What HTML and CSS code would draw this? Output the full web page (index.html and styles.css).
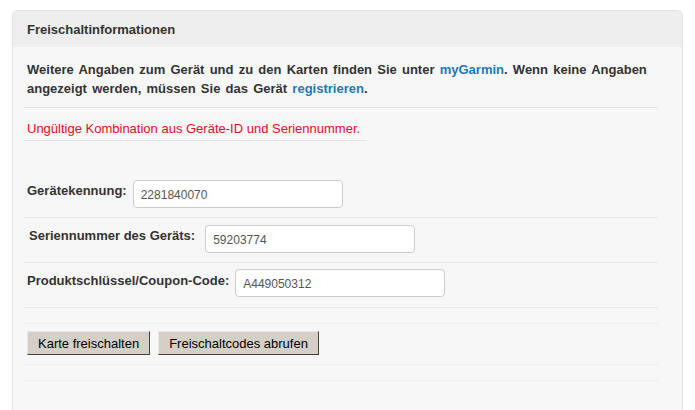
FILE: index.html
```html
<!DOCTYPE html>
<html lang="de">
<head>
<meta charset="utf-8">
<title>Freischaltinformationen</title>
<link rel="stylesheet" href="styles.css">
</head>
<body>
<div class="panel">
  <div class="panel-head">Freischaltinformationen</div>
  <div class="panel-body">
    <p class="intro">Weitere Angaben zum Gerät und zu den Karten finden Sie unter <a href="#">myGarmin</a>. Wenn keine Angaben angezeigt werden, müssen Sie das Gerät <a href="#">registrieren</a>.</p>
    <div class="error">Ungültige Kombination aus Geräte-ID und Seriennummer.</div>
    <div class="spacer"></div>
    <div class="row row1">
      <label class="label">Gerätekennung:</label>
      <input class="field" type="text" value="2281840070">
    </div>
    <div class="row row2">
      <label class="label">Seriennummer des Geräts:</label>
      <input class="field" type="text" value="59203774">
    </div>
    <div class="row row3">
      <label class="label">Produktschlüssel/Coupon-Code:</label>
      <input class="field" type="text" value="A449050312">
    </div>
    <div class="gap"></div>
    <div class="actions">
      <button class="btn" type="button">Karte freischalten</button>
      <button class="btn" type="button">Freischaltcodes abrufen</button>
    </div>
    <div class="gap"></div>
  </div>
</div>
</body>
</html>
```

FILE: styles.css
```css
html, body {
  margin: 0;
  padding: 0;
  background: #ffffff;
}
body {
  font-family: "Liberation Sans", Arial, sans-serif;
  color: #333333;
  padding: 10px 0 0 12px;
  height: 410px;
  box-sizing: border-box;
  overflow: hidden;
}
.panel {
  width: 669px;
  height: 399px;
  border: 1px solid #e2e2e2;
  border-bottom: none;
  border-radius: 6px 6px 0 0;
  background: #f7f7f7;
  overflow: hidden;
}
.panel-head {
  height: 36px;
  line-height: 38px;
  background: #eeeeee;
  padding-left: 14px;
  font-size: 13px;
  font-weight: bold;
  color: #333333;
}
.panel-body {
  padding: 0 24px 0 11px;
}
.intro {
  margin: 0;
  padding: 13px 0 9px 3px;
  font-size: 13px;
  font-weight: bold;
  line-height: 19px;
  word-spacing: 1.6px;
  color: #333333;
  border-bottom: 1px solid #e6e6e6;
}
.intro a {
  color: #1b7ab8;
  text-decoration: none;
}
.error {
  width: 340px;
  padding: 11px 0 2px 3px;
  font-size: 13px;
  line-height: 19px;
  color: #e0101e;
  border-bottom: 1px solid #e3e3e3;
}
.spacer {
  height: 31px;
}
.row {
  display: flex;
  align-items: flex-start;
  padding: 8px 0 9px 3px;
  border-bottom: 1px solid #e8e8e8;
}
.label {
  font-size: 13px;
  font-weight: bold;
  color: #333333;
  padding-top: 3px;
}
.row1 .label { margin-right: 6px; }
.row2 { padding-left: 5px; padding-top: 7px; }
.row2 .label { margin-right: 10px; }
.row3 { padding-top: 6px; padding-bottom: 10px; }
.row3 .label { margin-right: 6px; padding-top: 4px; }
.field {
  box-sizing: border-box;
  width: 210px;
  height: 28px;
  margin: 0;
  padding: 2px 7px 0;
  border: 1px solid #cccccc;
  border-radius: 4px;
  background: #ffffff;
  font-family: "Liberation Sans", Arial, sans-serif;
  font-size: 12px;
  color: #555555;
}
.gap {
  height: 15px;
  border-bottom: 1px solid #ececec;
}
.actions {
  display: flex;
  gap: 8px;
  padding: 7px 0 9px 3px;
  border-bottom: 1px solid #ececec;
}
.btn {
  box-sizing: border-box;
  height: 24px;
  margin: 0;
  padding: 0 10px;
  background: #d4d0c8;
  border: 1px solid;
  border-color: #e8e6e1 #404040 #404040 #e8e6e1;
  border-radius: 0;
  font-family: "Liberation Sans", Arial, sans-serif;
  font-size: 13px;
  color: #000000;
}
```
